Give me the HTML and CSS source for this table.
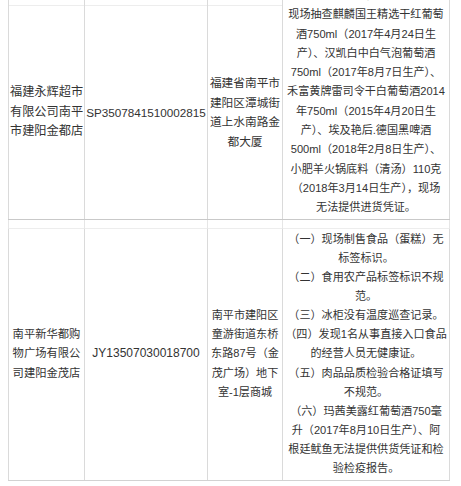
FILE: index.html
```html
<!DOCTYPE html>
<html lang="zh-CN">
<head>
<meta charset="utf-8">
<title>检查结果</title>
<link rel="stylesheet" href="styles.css">
</head>
<body>
<div class="viewport">
  <table class="grid">
    <colgroup>
      <col class="c1"><col class="c2"><col class="c3"><col class="c4">
    </colgroup>
    <tr class="row-a">
      <td class="cell name big split">福建永辉超市<br>有限公司南平<br>市建阳金都店</td>
      <td class="cell code tight split">SP3507841510002815</td>
      <td class="cell addr mid split">福建省南平市<br>建阳区潭城街<br>道上水南路金<br>都大厦</td>
      <td class="cell desc d1">标签标识不规范，未按规定公示<br>现场抽查麒麟国王精选干红葡萄<br>酒750ml（2017年4月24日生<br>产）、汉凯白中白气泡葡萄酒<br>750ml（2017年8月7日生产）、<br>禾富黄牌雷司令干白葡萄酒2014<br>年750ml（2015年4月20日生<br>产）、埃及艳后.德国黑啤酒<br>500ml（2018年2月8日生产）、<br>小肥羊火锅底料（清汤）110克<br>（2018年3月14日生产），现场<br>无法提供进货凭证。</td>
    </tr>
    <tr class="gap">
      <td class="cell"></td><td class="cell"></td><td class="cell"></td><td class="cell"></td>
    </tr>
    <tr class="row-b">
      <td class="cell name small">南平新华都购<br>物广场有限公<br>司建阳金茂店</td>
      <td class="cell code">JY13507030018700</td>
      <td class="cell addr small">南平市建阳区<br>童游街道东桥<br>东路87号（金<br>茂广场）地下<br>室-1层商城</td>
      <td class="cell desc d2">（一）现场制售食品（蛋糕）无<br>标签标识。<br>（二）食用农产品标签标识不规<br>范。<br>（三）冰柜没有温度巡查记录。<br>（四）发现1名从事直接入口食品<br>的经营人员无健康证。<br>（五）肉品品质检验合格证填写<br>不规范。<br>（六）玛茜美露红葡萄酒750毫<br>升（2017年8月10日生产）、阿<br>根廷鱿鱼无法提供供货凭证和检<br>验检疫报告。</td>
    </tr>
  </table>
</div>
</body>
</html>
```

FILE: styles.css
```css
html, body {
  margin: 0;
  padding: 0;
  background: #ffffff;
}

body {
  font-family: "Liberation Sans", "Noto Sans CJK SC", sans-serif;
  color: #333333;
}

.viewport {
  height: 486px;
  overflow: hidden;
  padding-left: 8px;
}

.grid {
  border-collapse: collapse;
  table-layout: fixed;
  width: 441px;
  margin-top: -15px;
}

.c1 { width: 76px; }
.c2 { width: 123px; }
.c3 { width: 75px; }
.c4 { width: 167px; }

.cell {
  padding: 0 1px;
  border-left: 1px solid #dadada;
  border-right: 1px solid #dadada;
  vertical-align: middle;
  text-align: center;
  white-space: nowrap;
}

.row-a { height: 234px; }
.gap { height: 9px; }
.row-b { height: 252px; }

/* the previous record's row ends 21px below the top of this row */
.split {
  padding-top: 21px;
  background: linear-gradient(#ededed, #ededed) 0 20px / 100% 1px no-repeat;
}

.row-a .cell {
  border-bottom: 1px solid #c9c9c9;
}

.gap .cell {
  border-left-color: #e6e6e6;
  border-right-color: #e6e6e6;
}

.row-b .cell {
  border-top: 1px solid #ededed;
  border-bottom: 1px solid #d2d2d2;
}

.name.big {
  font-size: 12.2px;
  line-height: 19.5px;
}

.name.small {
  font-size: 11.3px;
  line-height: 19.2px;
}

.code {
  font-size: 12px;
  line-height: 19.5px;
}

.code.tight {
  font-size: 11.7px;
}

.addr.mid {
  font-size: 11.7px;
  line-height: 19.6px;
}

.addr.small {
  font-size: 11.1px;
  line-height: 19.2px;
}

.desc {
  font-size: 11.1px;
}

.desc.d1 {
  line-height: 19.26px;
}

.desc.d2 {
  line-height: 19.1px;
}
```
